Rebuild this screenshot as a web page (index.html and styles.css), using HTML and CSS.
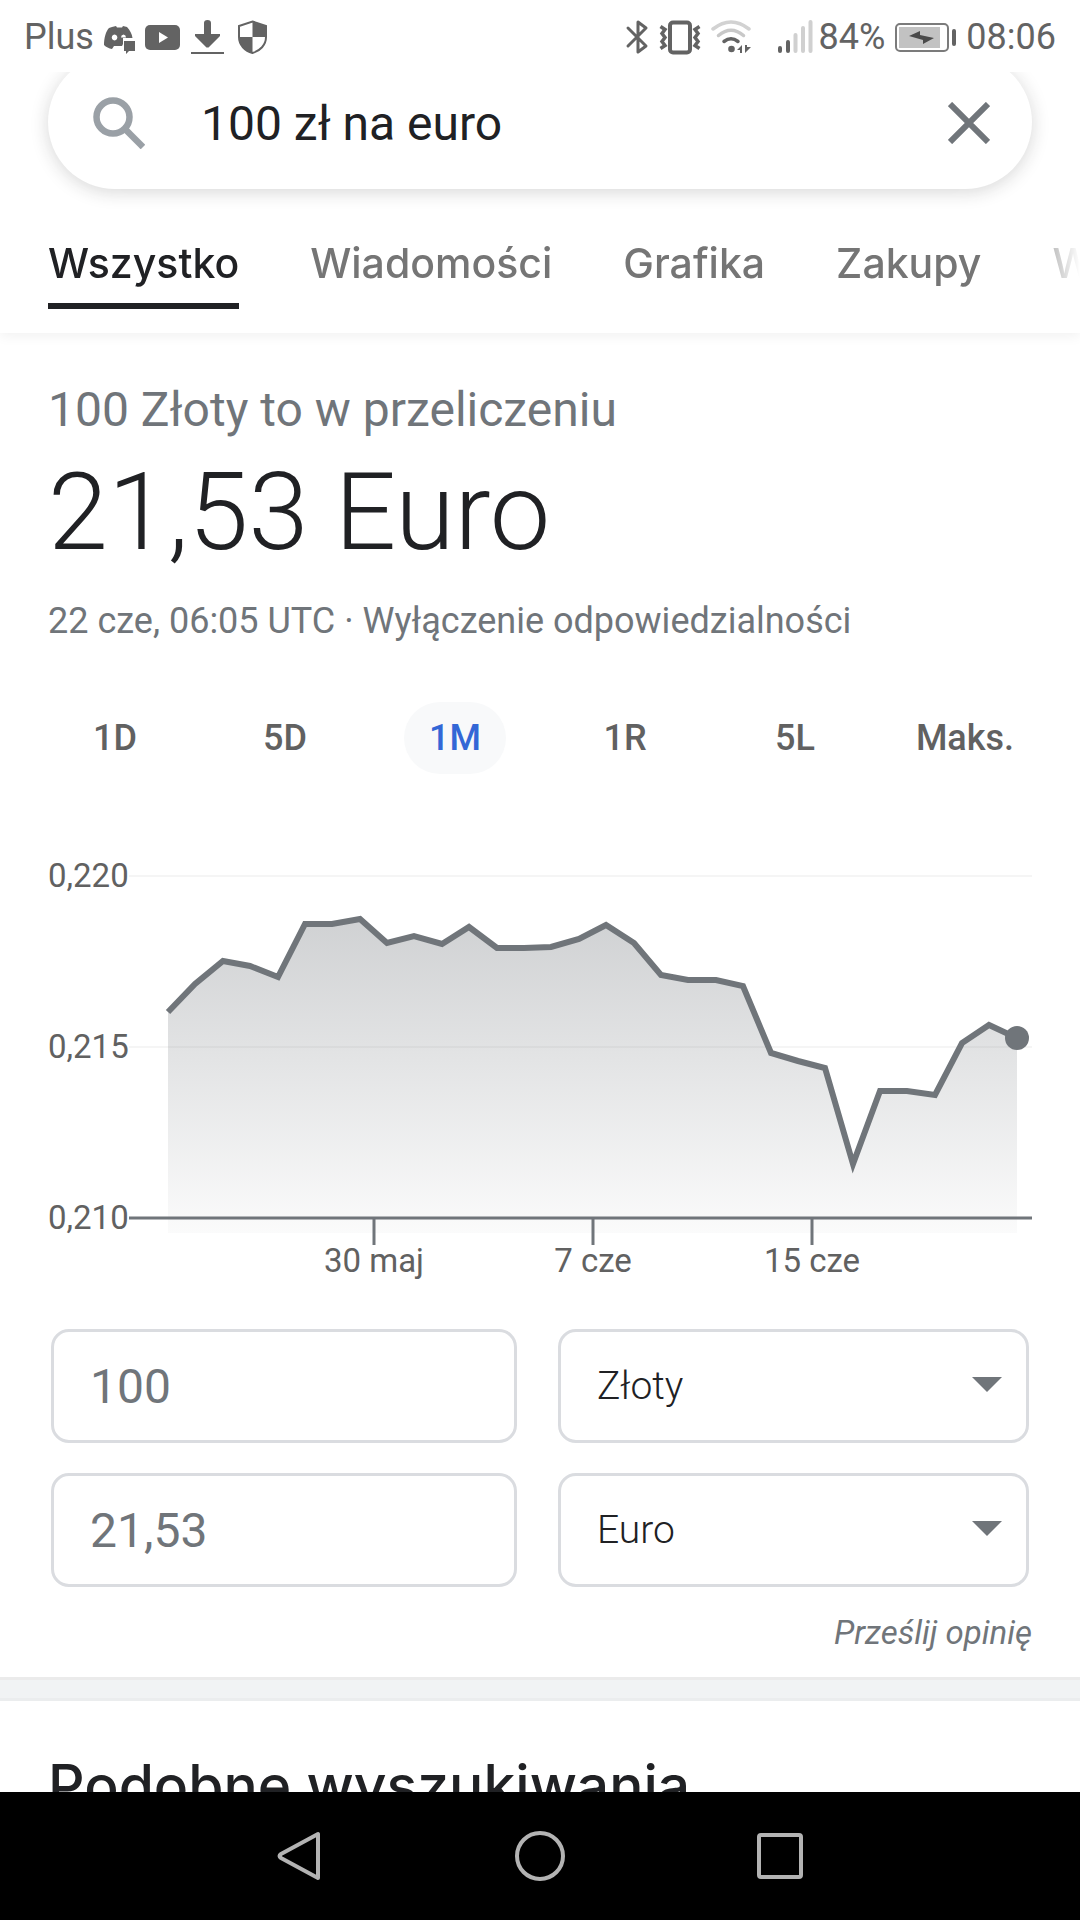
FILE: index.html
```html
<!DOCTYPE html>
<html lang="pl">
<head>
    <meta charset="UTF-8">
    <meta name="viewport" content="width=device-width, initial-scale=1.0">
    <title>100 zł na euro</title>
    <link rel="stylesheet" href="styles.css">
</head>
<body>
    <div class="status-bar">
        <div class="status-group">
            <span>Plus</span>
            <!-- Discord -->
            <svg width="31" height="36" viewBox="0 0 31 36">
                <path fill="#636363" fill-rule="evenodd" d="M8 8 L12 7 L13 8.500 H18 L19 7 L23 8 C26 11 28 15 28.500 19 H19 V25 L18 27 H10 L8 30 C5 29.500 2 28 0 26 C0 19 2 12 5 9 Z M10.500 15.500 a2.800 3 0 1 0 .1 0 Z M19.500 15.500 a2.800 3 0 0 0 -2.500 3 h5 a2.800 3 0 0 0 -2.500 -3 Z"/>
                <path fill="#636363" d="M20 22 h11 v10 h-6 l-3 3 v-3 h-2 z"/>
            </svg>
            <!-- YouTube -->
            <svg width="35" height="36" viewBox="0 0 35 36">
                <rect x="0" y="6" width="35" height="25" rx="5" fill="#636363"/>
                <path fill="#fff" d="M14 13 L23 18.500 L14 24 Z"/>
            </svg>
            <!-- pobieranie -->
            <svg width="35" height="36" viewBox="0 0 35 36">
                <path fill="#636363" d="M14 4 Q14 1 17.500 1 Q21 1 21 4 V15 H30 V17 L18.500 28.500 H16.500 L5 17 V15 H14 Z"/>
                <path fill="#636363" d="M1 33 h33 v2 h-33 z"/>
            </svg>
            <!-- tarcza -->
            <svg width="35" height="36" viewBox="0 0 35 36">
                <path fill="none" stroke="#636363" stroke-width="2" d="M17.500 2.500 L31 7 V18 C31 26 25 32 17.500 34 C10 32 4 26 4 18 V7 Z"/>
                <path fill="#636363" d="M17.500 3 L31 7 V18 H17.500 V34 C10 32 4 26 4 18 H17.500 Z"/>
            </svg>
        </div>
        <div class="status-group">
            <!-- Bluetooth -->
            <svg width="24" height="36" viewBox="0 0 24 36">
                <path fill="none" stroke="#636363" stroke-width="3" stroke-linecap="round" stroke-linejoin="round" d="M3 9 L21 27 L13 33 V3 L21 9 L3 27"/>
            </svg>
            <!-- wibracje -->
            <svg width="42" height="36" viewBox="0 0 42 36">
                <rect x="11" y="3.500" width="20" height="30" rx="3" fill="none" stroke="#636363" stroke-width="4"/>
                <path fill="none" stroke="#636363" stroke-width="3.500" d="M1.500 7.500 L6 10.500 L3 14.500 L6 18.500 L3 22.500 L6 26.500 L1.500 29.500 M40.500 7.500 L36 10.500 L39 14.500 L36 18.500 L39 22.500 L36 26.500 L40.500 29.500"/>
            </svg>
            <!-- Wi-Fi -->
            <svg width="56" height="36" viewBox="0 0 56 36">
                <g fill="none" stroke-width="3.500" stroke-linecap="round">
                    <path stroke="#d2d2d2" d="M2 10 Q20 -4 38 10"/>
                    <path stroke="#c8c8c8" d="M7.500 16.500 Q20 6 32.500 16.500"/>
                    <path stroke="#636363" d="M13 22.500 Q20 17 27 22.500"/>
                </g>
                <circle cx="20.500" cy="30" r="3.300" fill="#636363"/>
                <path fill="#636363" d="M26 31 L31 26 V34 H29 V31 Z M34 26 V34 L40 28 H36 V26 Z"/>
            </svg>
            <span class="signal">
                <svg width="36" height="36" viewBox="0 0 36 36">
                    <g stroke-width="4" stroke-linecap="round">
                        <path stroke="#636363" d="M3 29 V32 M11 23 V32"/>
                        <path stroke="#d0d0d0" d="M18.500 16 V32 M26 9 V32 M33.500 3 V32"/>
                    </g>
                </svg>
                <span>84%</span>
            </span>
            <!-- bateria -->
            <svg width="61" height="36" viewBox="0 0 61 36">
                <rect x="1" y="5" width="52" height="27" rx="4" fill="none" stroke="#7b7b7b" stroke-width="2"/>
                <rect x="4" y="8" width="41" height="21" fill="#c2c2c2"/>
                <rect x="57" y="10" width="4" height="17" rx="2" fill="#636363"/>
                <path fill="#4a4a4a" d="M14 17 L25 12 L25 16 L39 19 L28 25 L28 21 Z"/>
            </svg>
            <span>08:06</span>
        </div>
    </div>

    <div class="page">
        <header>
            <form class="search-box">
                <svg class="search-icon" viewBox="0 0 52 52">
                    <circle cx="20" cy="20" r="16.500" fill="none" stroke="#9aa0a6" stroke-width="6.500"/>
                    <path stroke="#9aa0a6" stroke-width="6.500" d="M31 31 L50 50"/>
                </svg>
                <input type="text" class="search-input" value="100 zł na euro" aria-label="Szukaj">
                <button type="reset" class="clear" aria-label="Wyczyść">
                    <svg width="42" height="42" viewBox="0 0 42 42">
                        <path stroke="#70757a" stroke-width="6" d="M2 2 L40 40 M40 2 L2 40"/>
                    </svg>
                </button>
            </form>
            <nav class="tabs">
                <a href="#wszystko" class="active">Wszystko</a>
                <a href="#wiadomosci">Wiadomości</a>
                <a href="#grafika">Grafika</a>
                <a href="#zakupy">Zakupy</a>
                <a href="#wideo">Wideo</a>
            </nav>
        </header>

        <main>
            <section class="converter">
                <p class="amount-from">100 Złoty to w przeliczeniu</p>
                <p class="amount-to">21,53 Euro</p>
                <p class="meta">22 cze, 06:05 UTC · <a href="#zastrzezenia">Wyłączenie odpowiedzialności</a></p>

                <div class="ranges">
                    <button>1D</button>
                    <button>5D</button>
                    <button class="selected">1M</button>
                    <button>1R</button>
                    <button>5L</button>
                    <button>Maks.</button>
                </div>

                <svg class="chart" viewBox="0 0 984 453">
                    <defs>
                        <linearGradient id="fill" gradientUnits="userSpaceOnUse" x1="0" y1="79" x2="0" y2="393">
                            <stop offset="0" stop-color="#70757a" stop-opacity="0.33"/>
                            <stop offset="1" stop-color="#70757a" stop-opacity="0.03"/>
                        </linearGradient>
                    </defs>
                    <g class="grid">
                        <path d="M81 36 H984"/>
                        <path d="M81 207 H984"/>
                    </g>
                    <path fill="url(#fill)" d="M120 172 L147 144 175 121 202 126 230 137 257 84 284 84 312 79 339 103 366 96 394 104 421 87 449 108 476 108 503 107 531 99 558 85 586 103 613 135 640 140 668 140 695 146 723 213 750 221 777 228 805 324 832 251 859 251 887 255 914 203 941 185 969 198 V393 H120 Z"/>
                    <g class="axis">
                        <path d="M81 378 H984"/>
                        <path d="M326 378 V405"/>
                        <path d="M545 378 V405"/>
                        <path d="M764 378 V405"/>
                    </g>
                    <polyline class="line" points="120,172 147,144 175,121 202,126 230,137 257,84 284,84 312,79 339,103 366,96 394,104 421,87 449,108 476,108 503,107 531,99 558,85 586,103 613,135 640,140 668,140 695,146 723,213 750,221 777,228 805,324 832,251 859,251 887,255 914,203 941,185 969,198"/>
                    <circle cx="969" cy="198" r="12" fill="#70757a"/>
                    <g class="labels">
                        <text x="0" y="47">0,220</text>
                        <text x="0" y="218">0,215</text>
                        <text x="0" y="389">0,210</text>
                        <text class="date" x="326" y="432">30 maj</text>
                        <text class="date" x="545" y="432">7 cze</text>
                        <text class="date" x="764" y="432">15 cze</text>
                    </g>
                </svg>

                <form class="fields">
                    <input type="text" value="100" aria-label="Kwota w złotych">
                    <div class="select">
                        <select aria-label="Waluta źródłowa">
                            <option>Złoty</option>
                        </select>
                    </div>
                    <input type="text" value="21,53" aria-label="Kwota w euro">
                    <div class="select">
                        <select aria-label="Waluta docelowa">
                            <option>Euro</option>
                        </select>
                    </div>
                </form>
                <a class="feedback" href="#opinia">Prześlij opinię</a>
            </section>

            <div class="separator"></div>

            <section class="related">
                <h2>Podobne wyszukiwania</h2>
            </section>
        </main>
    </div>

    <div class="nav-bar">
        <button aria-label="Wstecz">
            <svg width="50" height="50" viewBox="0 0 50 50">
                <path d="M43 3 V47 L6 27 Q3 25 6 23 Z"/>
            </svg>
        </button>
        <button aria-label="Ekran główny">
            <svg width="50" height="50" viewBox="0 0 50 50">
                <circle cx="25" cy="25" r="23"/>
            </svg>
        </button>
        <button aria-label="Ostatnie">
            <svg width="50" height="50" viewBox="0 0 50 50">
                <rect x="4" y="4" width="42" height="42" rx="2"/>
            </svg>
        </button>
    </div>
</body>
</html>
```
FILE: styles.css
```css
* {
    box-sizing: border-box;
}
body {
    font-family: Roboto, "Liberation Sans", sans-serif;
    margin: 0;
    height: 100vh;
    display: flex;
    flex-direction: column;
    background-color: #fff;
    color: #202124;
}
a {
    color: inherit;
    text-decoration: none;
}
p, h2 {
    margin: 0;
}
button {
    font: inherit;
    color: inherit;
    background: none;
    border: none;
    padding: 0;
}
svg {
    display: block;
}

/* system status */
.status-bar {
    flex: none;
    height: 72px;
    padding: 2px 24px 0;
    display: flex;
    justify-content: space-between;
    align-items: center;
    font-size: 36px;
    color: #636363;
}
.status-group {
    display: flex;
    align-items: center;
    gap: 10px;
}
.signal {
    display: flex;
    align-items: center;
    gap: 6px;
}

/* page */
.page {
    flex: 1;
    min-height: 0;
    overflow: hidden;
}
header {
    padding-bottom: 24px;
    box-shadow: 0 3px 12px rgba(0, 0, 0, 0.06);
}
.search-box {
    height: 134px;
    margin: -17px 48px 0;
    padding: 2px 42px 0 45px;
    display: flex;
    align-items: center;
    border-radius: 67px;
    box-shadow: 0 3px 18px rgba(32, 33, 36, 0.18);
}
.search-icon {
    width: 52px;
    height: 52px;
    flex: none;
}
.search-input {
    flex: 1;
    min-width: 0;
    margin-left: 56px;
    padding: 0;
    border: none;
    outline: none;
    background: none;
    font: inherit;
    font-size: 48px;
    color: #202124;
}
.tabs {
    display: flex;
    gap: 71px;
    padding: 50px 0 0 48px;
    overflow: hidden;
    font-family: Inter, Roboto, sans-serif;
    font-size: 41px;
    font-weight: 500;
    line-height: 48px;
    color: #757575;
    -webkit-mask-image: linear-gradient(to left, transparent, #000 60px);
    mask-image: linear-gradient(to left, transparent, #000 60px);
}
.tabs a {
    flex: none;
    padding-bottom: 16px;
    border-bottom: 6px solid transparent;
}
.tabs .active {
    color: #202124;
    border-color: #202124;
}

/* converter */
.converter {
    padding: 47px 48px 20px;
    color: #70757a;
}
.amount-from {
    font-size: 48px;
    line-height: 60px;
}
.amount-to {
    margin-top: 12px;
    font-size: 108px;
    font-weight: 300;
    line-height: 120px;
    color: #202124;
}
.meta {
    margin-top: 25px;
    font-size: 36px;
    line-height: 48px;
}
.ranges {
    display: grid;
    grid-template-columns: repeat(6, 1fr);
    justify-items: center;
    margin: 57px -18px 0;
    font-size: 36px;
    font-weight: 500;
    color: #616161;
}
.ranges button {
    height: 72px;
    padding: 0 25px;
    border-radius: 36px;
}
.ranges .selected {
    background-color: #f8f9fa;
    color: #3367d6;
}
.chart {
    width: 100%;
    height: auto;
    margin: 66px 0 36px;
}
.grid path {
    stroke: #f5f5f5;
    stroke-width: 2;
}
.axis path {
    stroke: #70757a;
    stroke-width: 3;
}
.line {
    fill: none;
    stroke: #70757a;
    stroke-width: 6;
    stroke-miterlimit: 10;
}
.labels {
    font-size: 33px;
    fill: #616161;
}
.date {
    text-anchor: middle;
}
.fields {
    display: grid;
    grid-template-columns: 466fr 471fr;
    gap: 30px 41px;
    margin: 0 3px;
}
.fields input,
.fields select {
    width: 100%;
    height: 114px;
    padding: 0 36px;
    border: 3px solid #dadce0;
    border-radius: 18px;
    background: none;
    outline: none;
    font: inherit;
}
.fields input {
    font-size: 48px;
    color: #70757a;
}
.fields select {
    appearance: none;
    font-size: 39px;
    font-weight: 300;
    color: #202124;
}
.select {
    position: relative;
}
.select::after {
    content: "";
    position: absolute;
    right: 27px;
    top: 48px;
    border: 15px solid transparent;
    border-top-color: #70757a;
    border-bottom: none;
    pointer-events: none;
}
.feedback {
    display: block;
    margin-top: 22px;
    text-align: right;
    font-size: 33px;
    font-style: italic;
    line-height: 48px;
}
.separator {
    height: 24px;
    background-color: #f1f3f4;
    border-top: 3px solid #ebebeb;
    border-bottom: 3px solid #ebedee;
}
.related {
    padding: 49px 48px 0;
}
.related h2 {
    font-family: Inter, Roboto, sans-serif;
    font-size: 57px;
    font-weight: 500;
    line-height: 72px;
    white-space: nowrap;
}

/* system navigation */
.nav-bar {
    flex: none;
    height: 128px;
    display: flex;
    justify-content: center;
    align-items: center;
    gap: 190px;
    background-color: #000;
}
.nav-bar svg {
    fill: none;
    stroke: #b3b3b3;
    stroke-width: 4;
    stroke-linejoin: round;
}
```
